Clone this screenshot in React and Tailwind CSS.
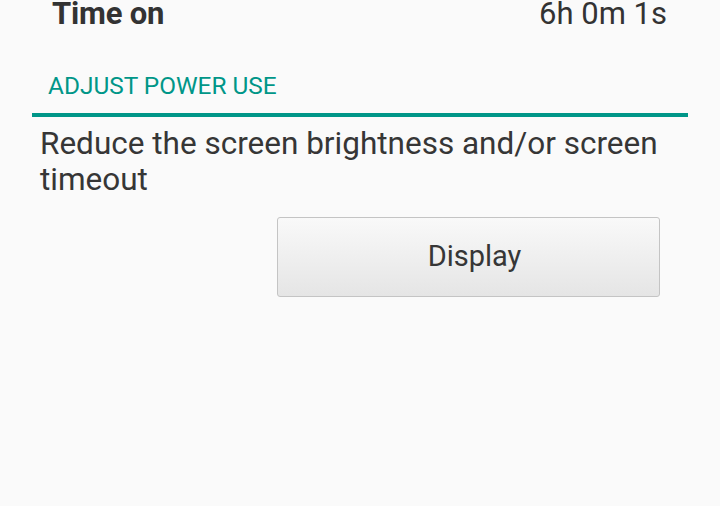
import React from 'react';

const App = () => {
  return (
    <div className="w-[720px] h-[506px] bg-[#fafafa] overflow-hidden font-['Roboto',sans-serif] text-[#333333]">
      {/* Time on row */}
      <div className="flex items-center justify-between pl-[52px] pr-[53px] h-[28px] leading-[28px]">
        <span className="text-[31px] font-bold tracking-[-0.2px]">Time on</span>
        <span className="text-[31px]">6h 0m 1s</span>
      </div>

      {/* Section header */}
      <div className="mx-[32px] mt-[44px] border-b-4 border-[#009688] pb-[13px]">
        <div className="pl-[16px] text-[24.4px] leading-[28px] text-[#009688]">ADJUST POWER USE</div>
      </div>

      {/* Tip */}
      <div className="px-[40px] pt-[9px]">
        <p className="text-[31.5px] leading-[36px] text-[#363636]">
          Reduce the screen brightness and/or screen timeout
        </p>
        <div className="flex justify-end pr-[20px] mt-[19px]">
          <button className="w-[383px] h-[80px] pl-[12px] rounded-[3px] border border-[#c4c4c4] bg-gradient-to-b from-[#f9f9f9] to-[#e5e5e5] text-[29px] text-[#363636]">
            Display
          </button>
        </div>
      </div>
    </div>
  );
};

export default App;
